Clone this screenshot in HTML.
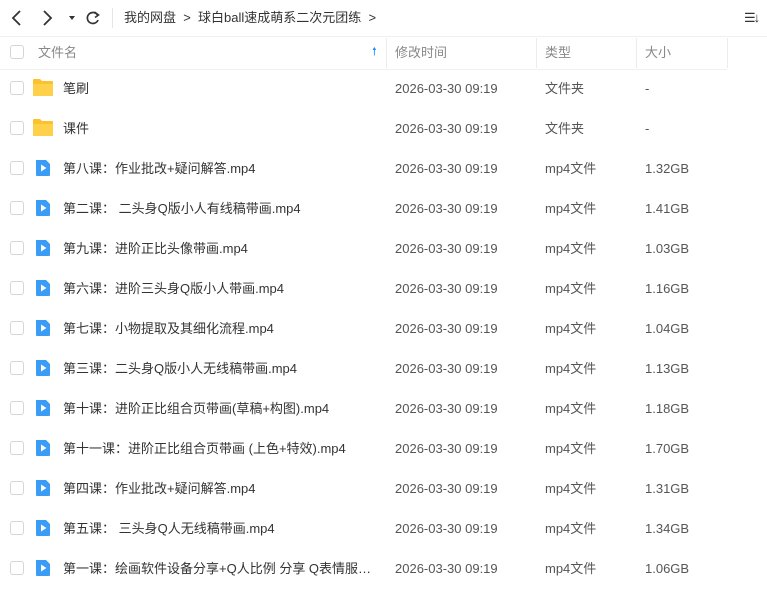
<!DOCTYPE html>
<html><head><meta charset="utf-8"><style>
body{margin:0;width:767px;height:590px;overflow:hidden;background:#fff;font-family:"Liberation Sans","Noto Sans CJK SC",sans-serif;color:#333;font-size:13px;line-height:16px;position:relative}
.a{position:absolute;white-space:nowrap}
.cb{position:absolute;left:10px;width:12px;height:12px;border:1px solid #d6d6d6;border-radius:3px;background:#fff}
.sep{position:absolute;top:38px;width:1px;height:30px;background:#ececec}
.n{max-width:312px;overflow:hidden;text-overflow:ellipsis}
</style></head><body>
<svg class="a" style="left:0;top:0" width="110" height="36" viewBox="0 0 110 36">
<path d="M20 11 L13 18 L20 25" fill="none" stroke="#333" stroke-width="1.8"/>
<path d="M44 11 L51 18 L44 25" fill="none" stroke="#333" stroke-width="1.8"/>
<path d="M69 16 L75 16 L72 20 Z" fill="#333"/>
<path d="M97.5 15 A5.5 5.5 0 1 0 98 20" fill="none" stroke="#333" stroke-width="1.7"/>
<path d="M94.5 12 L98.5 15 L95 17.5" fill="none" stroke="#333" stroke-width="1.6"/>
</svg>
<div class="a" style="left:112px;top:8px;width:1px;height:20px;background:#e5e5e5"></div>
<div class="a" style="left:124px;top:10px;font-size:13px;color:#333">我的网盘 &nbsp;&gt;&nbsp; 球白ball速成萌系二次元团练 &nbsp;&gt;</div>
<div class="a" style="left:744px;top:10px;font-size:13px">☰<span style="margin-left:-2px">↓</span></div>
<div class="a" style="left:0;top:36px;width:767px;height:1px;background:#f0f0f0"></div>
<div class="a" style="left:0;top:69px;width:727px;height:1px;background:#f0f0f0"></div>
<div class="sep" style="left:386px"></div><div class="sep" style="left:536px"></div><div class="sep" style="left:636px"></div><div class="sep" style="left:727px"></div>
<div class="cb" style="top:45px"></div>
<div class="a" style="left:38px;top:45px;color:#888">文件名</div>
<div class="a" style="left:372px;top:44px;color:#1890ff;font-size:11px">🠕</div>
<div class="a" style="left:395px;top:45px;color:#888">修改时间</div>
<div class="a" style="left:545px;top:45px;color:#888">类型</div>
<div class="a" style="left:645px;top:45px;color:#888">大小</div>
<div id="rows"></div>
<script>
var d=[["笔刷",0,"文件夹","-"],["课件",0,"文件夹","-"],["第八课：作业批改+疑问解答.mp4",1,"mp4文件","1.32GB"],["第二课： 二头身Q版小人有线稿带画.mp4",1,"mp4文件","1.41GB"],["第九课：进阶正比头像带画.mp4",1,"mp4文件","1.03GB"],["第六课：进阶三头身Q版小人带画.mp4",1,"mp4文件","1.16GB"],["第七课：小物提取及其细化流程.mp4",1,"mp4文件","1.04GB"],["第三课：二头身Q版小人无线稿带画.mp4",1,"mp4文件","1.13GB"],["第十课：进阶正比组合页带画(草稿+构图).mp4",1,"mp4文件","1.18GB"],["第十一课：进阶正比组合页带画 (上色+特效).mp4",1,"mp4文件","1.70GB"],["第四课：作业批改+疑问解答.mp4",1,"mp4文件","1.31GB"],["第五课： 三头身Q人无线稿带画.mp4",1,"mp4文件","1.34GB"],["第一课：绘画软件设备分享+Q人比例 分享 Q表情服装简单设计.mp4",1,"mp4文件","1.06GB"]];
var h="";d.forEach(function(r,i){var c=88+i*40,t=c-7;
h+='<div class="cb" style="top:'+(c-7)+'px"></div>';
if(r[1])h+='<svg class="a" style="left:34px;top:'+(c-9)+'px" width="18" height="18"><path d="M2 1 H12 L16 5 V16 Q16 17 15 17 H3 Q2 17 2 16 Z" fill="#3b9cf5"/><path d="M7 5.5 L12.5 9 L7 12.5 Z" fill="#fff"/></svg>';
else h+='<svg class="a" style="left:32px;top:'+(c-10)+'px" width="22" height="19"><path d="M1 2 Q1 1 2 1 H8 L10 3 H20 Q21 3 21 4 V17 Q21 18 20 18 H2 Q1 18 1 17 Z" fill="#fbc230"/><path d="M1 6 H21 V17 Q21 18 20 18 H2 Q1 18 1 17 Z" fill="#ffd049"/></svg>';
h+='<div class="a n" style="left:63px;top:'+t+'px">'+r[0]+'</div><div class="a" style="left:395px;top:'+t+'px;color:#555">2026-03-30 09:19</div><div class="a" style="left:545px;top:'+t+'px;color:#555">'+r[2]+'</div><div class="a" style="left:645px;top:'+t+'px;color:#555">'+r[3]+'</div>';});
document.getElementById("rows").innerHTML=h;
</script>
</body></html>
